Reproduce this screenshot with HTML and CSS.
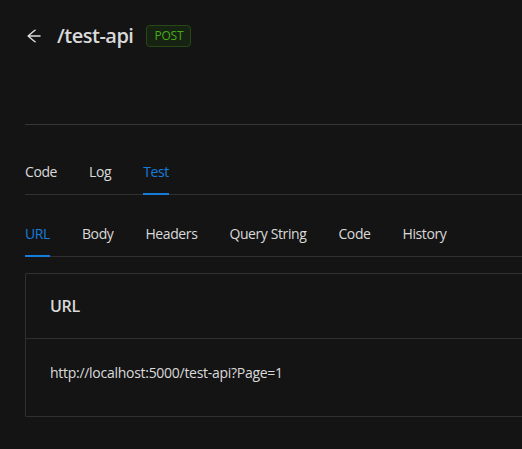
FILE: index.html
```html
<!DOCTYPE html>
<html>
<head>
<meta charset="utf-8">
<link rel="stylesheet" href="styles.css">
</head>
<body>
<div class="page">
  <div class="page-header">
    <div class="heading">
      <span class="back">
        <svg viewBox="64 64 896 896" width="16" height="16" fill="currentColor"><path d="M872 474H286.9l350.2-304c5.6-4.9 2.2-14-5.2-14h-88.5c-3.9 0-7.6 1.4-10.5 3.9L155 487.8a31.96 31.96 0 000 48.3L535.1 866c1.5 1.3 3.3 2 5.2 2h91.5c7.4 0 10.8-9.2 5.2-14L286.9 550H872c4.4 0 8-3.6 8-8v-60c0-4.4-3.6-8-8-8z"/></svg>
      </span>
      <span class="title">/test-api</span>
      <span class="tag">POST</span>
    </div>
  </div>

  <div class="tabs tabs-main">
    <div class="tab">Code</div>
    <div class="tab">Log</div>
    <div class="tab active">Test</div>
  </div>

  <div class="tabs tabs-sub">
    <div class="tab active">URL</div>
    <div class="tab">Body</div>
    <div class="tab">Headers</div>
    <div class="tab">Query String</div>
    <div class="tab">Code</div>
    <div class="tab">History</div>
  </div>

  <div class="card">
    <div class="card-head">URL</div>
    <div class="card-body">http://localhost:5000/test-api?Page=1</div>
  </div>
</div>
</body>
</html>
```

FILE: styles.css
```css
html, body {
  margin: 0;
  padding: 0;
  background: #141414;
}
body {
  font-family: "Open Sans", "Noto Sans", sans-serif;
  font-size: 14px;
  line-height: 22px;
  letter-spacing: -0.28px;
  color: rgba(255, 255, 255, 0.85);
}
.page {
  padding-left: 25px;
  overflow: hidden;
}
.page-header {
  padding-top: 22px;
  height: 102px;
  border-bottom: 1px solid #363636;
  margin-bottom: 24px;
}
.heading {
  display: flex;
  align-items: center;
  height: 28px;
}
.back {
  display: flex;
  width: 16px;
  height: 16px;
  margin-left: 1px;
  margin-right: 15px;
  color: rgba(255, 255, 255, 0.85);
}
.title {
  font-size: 20px;
  font-weight: 600;
  line-height: 28px;
  letter-spacing: -0.5px;
}
.tag {
  margin-left: 13px;
  height: 20px;
  line-height: 20px;
  padding: 0 7px;
  font-size: 12px;
  letter-spacing: -0.2px;
  color: #49aa19;
  background: #162312;
  border: 1px solid #274916;
  border-radius: 4px;
}
.tabs {
  display: flex;
  gap: 32px;
  border-bottom: 1px solid #303030;
  margin-bottom: 16px;
  height: 45px;
}
.tab {
  position: relative;
  padding: 12px 0 11px;
  white-space: nowrap;
  letter-spacing: -0.4px;
}
.tab.active {
  color: #177ddc;
}
.tab.active::after {
  content: "";
  position: absolute;
  left: 0;
  right: 0;
  bottom: -1px;
  height: 2px;
  background: #177ddc;
}
.card {
  border: 1px solid #303030;
  border-right: 0;
  border-radius: 2px 0 0 2px;
}
.card-head {
  height: 64px;
  line-height: 64px;
  padding: 0 24px;
  font-size: 16px;
  font-weight: 600;
  border-bottom: 1px solid #303030;
}
.card-body {
  padding: 23px 24px 32px;
}
```
